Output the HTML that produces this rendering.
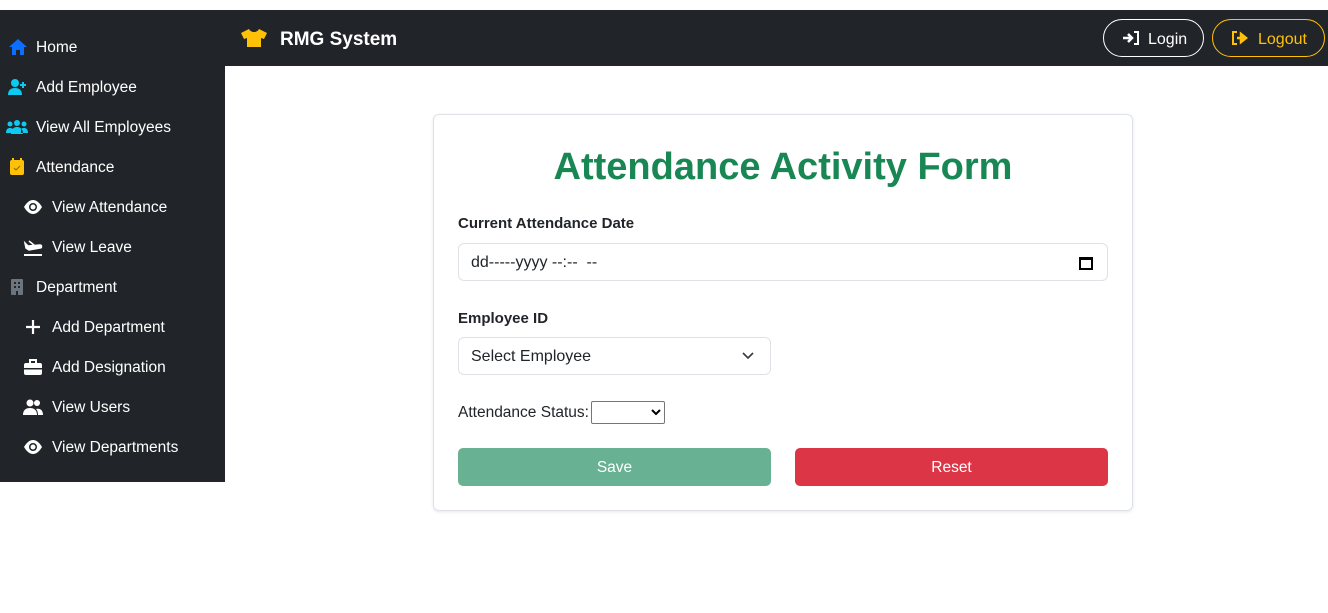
<!DOCTYPE html>
<html><head><meta charset="utf-8"><style>
*{box-sizing:border-box;margin:0;padding:0}
body{width:1328px;height:613px;background:#fff;font-family:"Liberation Sans",sans-serif;position:relative;overflow:hidden}
.nav{position:absolute;left:0;top:10px;width:1328px;height:56px;background:#212529}
.side{position:absolute;left:0;top:10px;width:225px;height:472px;background:#212529}
.it{position:absolute;color:#fff;font-size:15.5px;line-height:20px;margin-top:1px}
.ic{position:absolute;width:20px;height:20px}
.brand{position:absolute;left:280px;top:29px;color:#fff;font-weight:bold;font-size:19px}
.btn{position:absolute;top:19px;height:38px;border-radius:19px;border:1px solid #fff;color:#fff;font-size:16px;line-height:39px}
.btn svg{position:absolute;top:10px}
.card{position:absolute;left:433px;top:114px;width:700px;height:397px;border:1px solid #dee2e6;border-radius:6px;box-shadow:0 1px 3px rgba(0,0,0,.1)}
.t{position:absolute;top:143px;text-align:center;color:#198754;font-size:38px;font-weight:bold;line-height:48px}
.lbl{position:absolute;left:458px;font-weight:bold;font-size:15px;color:#212529}
.inp{position:absolute;border:1px solid #dee2e6;border-radius:6px;font-size:16px;color:#212529;padding-left:12px;line-height:38px}
.b{position:absolute;top:448px;height:38px;width:313px;border-radius:5px;color:#fff;text-align:center;line-height:39px;font-size:15.5px}
</style></head><body>
<div class="nav"></div>
<div class="side"></div>
<svg class="ic" style="left:240px;top:28px;width:28px" viewBox="0 0 28 20"><path d="M9 1L1 5l3 6 3-1v9h14v-9l3 1 3-6-8-4c-1 2-3 3-5 3s-4-1-5-3z" fill="#ffc107"/></svg>
<div class="brand">RMG System</div>
<div class="btn" style="left:1103px;width:101px;padding-left:44px"><svg style="left:18px" width="18" height="16" viewBox="0 0 18 16"><path d="M1 8h8M6 4l4 4-4 4" stroke="#fff" stroke-width="2.5" fill="none"/><path d="M12 2h4v12h-4" stroke="#fff" stroke-width="2" fill="none"/></svg>Login</div>
<div class="btn" style="left:1212px;width:113px;border-color:#ffc107;color:#ffc107;padding-left:45px"><svg style="left:18px" width="18" height="16" viewBox="0 0 18 16"><path d="M6 2H2v12h4" stroke="#ffc107" stroke-width="2" fill="none"/><path d="M6 8h7M10 4l5 4-5 4z" stroke="#ffc107" stroke-width="2.5" fill="#ffc107"/></svg>Logout</div>

<svg class="ic" style="left:8px;top:37px" viewBox="0 0 20 20"><path d="M10 2L1 10h3v8h4v-5h4v5h4v-8h3z" fill="#0d6efd"/></svg>
<div class="it" style="left:36px;top:37px">Home</div>
<svg class="ic" style="left:8px;top:77px" viewBox="0 0 20 20"><circle cx="7" cy="6" r="4" fill="#0dcaf0"/><path d="M0 18c0-5 3-7 7-7s7 2 7 7z" fill="#0dcaf0"/><path d="M15 5v6M12 8h6" stroke="#0dcaf0" stroke-width="2"/></svg>
<div class="it" style="left:36px;top:77px">Add Employee</div>
<svg class="ic" style="left:6px;top:117px;width:22px" viewBox="0 0 22 20"><circle cx="11" cy="6" r="3" fill="#0dcaf0"/><circle cx="4" cy="7" r="2.5" fill="#0dcaf0"/><circle cx="18" cy="7" r="2.5" fill="#0dcaf0"/><path d="M5 17c0-5 3-7 6-7s6 2 6 7zM0 16c0-4 2-5 4-5s3 1 3 2v3zM22 16c0-4-2-5-4-5s-3 1-3 2v3z" fill="#0dcaf0"/></svg>
<div class="it" style="left:36px;top:117px">View All Employees</div>
<svg class="ic" style="left:8px;top:157px" viewBox="0 0 20 20"><rect x="2" y="3" width="14" height="15" rx="2" fill="#ffc107"/><path d="M5 1v4M13 1v4" stroke="#ffc107" stroke-width="2"/><path d="M6 11l2 2 4-4" stroke="#8a6a00" fill="none"/></svg>
<div class="it" style="left:36px;top:157px">Attendance</div>
<svg class="ic" style="left:23px;top:197px" viewBox="0 0 20 20"><path d="M1 10c3-5 6-7 9-7s6 2 9 7c-3 5-6 7-9 7s-6-2-9-7z" fill="#fff"/><circle cx="10" cy="10" r="4" fill="#212529"/><circle cx="10" cy="10" r="2.5" fill="#fff"/></svg>
<div class="it" style="left:52px;top:197px">View Attendance</div>
<svg class="ic" style="left:23px;top:237px" viewBox="0 0 20 20"><path d="M2 6l3 3 12-1c2 0 2 3 0 3L6 13 3 11zM6 4l5 4" stroke="#fff" stroke-width="1.5" fill="#fff"/><rect x="1" y="17" width="18" height="2" fill="#fff"/></svg>
<div class="it" style="left:52px;top:237px">View Leave</div>
<svg class="ic" style="left:8px;top:277px" viewBox="0 0 20 20"><rect x="3" y="2" width="12" height="16" rx="1" fill="#6c757d"/><rect x="6" y="5" width="2" height="2" fill="#212529"/><rect x="10" y="5" width="2" height="2" fill="#212529"/><rect x="6" y="9" width="2" height="2" fill="#212529"/><rect x="10" y="9" width="2" height="2" fill="#212529"/><rect x="8" y="14" width="2" height="4" fill="#212529"/></svg>
<div class="it" style="left:36px;top:277px">Department</div>
<svg class="ic" style="left:23px;top:317px" viewBox="0 0 20 20"><path d="M10 3v14M3 10h14" stroke="#fff" stroke-width="2.2"/></svg>
<div class="it" style="left:52px;top:317px">Add Department</div>
<svg class="ic" style="left:23px;top:357px" viewBox="0 0 20 20"><rect x="1" y="6" width="18" height="12" rx="2" fill="#fff"/><path d="M7 6V3h6v3" stroke="#fff" stroke-width="2" fill="none"/><rect x="1" y="11" width="18" height="1.5" fill="#212529"/></svg>
<div class="it" style="left:52px;top:357px">Add Designation</div>
<svg class="ic" style="left:23px;top:397px" viewBox="0 0 20 20"><circle cx="7" cy="6" r="3.5" fill="#fff"/><circle cx="14" cy="6" r="3" fill="#fff"/><path d="M0 18c0-5 3-7 7-7s7 2 7 7zM15 18c0-3-1-5-2-6 4-1 7 1 7 6z" fill="#fff"/></svg>
<div class="it" style="left:52px;top:397px">View Users</div>
<svg class="ic" style="left:23px;top:437px" viewBox="0 0 20 20"><path d="M1 10c3-5 6-7 9-7s6 2 9 7c-3 5-6 7-9 7s-6-2-9-7z" fill="#fff"/><circle cx="10" cy="10" r="4" fill="#212529"/><circle cx="10" cy="10" r="2.5" fill="#fff"/></svg>
<div class="it" style="left:52px;top:437px">View Departments</div>

<div class="card"></div>
<div class="t" style="left:433px;width:700px">Attendance Activity Form</div>
<div class="lbl" style="top:215px">Current Attendance Date</div>
<div class="inp" style="left:458px;top:243px;width:650px;height:38px">dd-----yyyy --:-- &nbsp;--
<svg style="position:absolute;right:14px;top:11px" width="14" height="15" viewBox="0 0 14 15"><rect x="1" y="3" width="12" height="11" fill="none" stroke="#000" stroke-width="2"/><rect x="1" y="2" width="12" height="3" fill="#000"/></svg></div>
<div class="lbl" style="top:310px">Employee ID</div>
<div class="inp" style="left:458px;top:337px;width:313px;height:38px">Select Employee
<svg style="position:absolute;right:16px;top:14px" width="12" height="8" viewBox="0 0 12 8"><path d="M1 1l5 5 5-5" stroke="#343a40" stroke-width="1.6" fill="none"/></svg></div>
<div style="position:absolute;left:458px;top:404px;font-size:15.5px;color:#212529">Attendance Status:</div>
<div style="position:absolute;left:591px;top:401px;width:74px;height:23px;border:1px solid #767676;border-radius:2px">
<svg style="position:absolute;right:3px;top:7px" width="10" height="7" viewBox="0 0 10 7"><path d="M1 1l4 4 4-4" stroke="#000" stroke-width="2" fill="none"/></svg></div>
<div class="b" style="left:458px;background:#68b193">Save</div>
<div class="b" style="left:795px;background:#dc3545">Reset</div>
</body></html>
